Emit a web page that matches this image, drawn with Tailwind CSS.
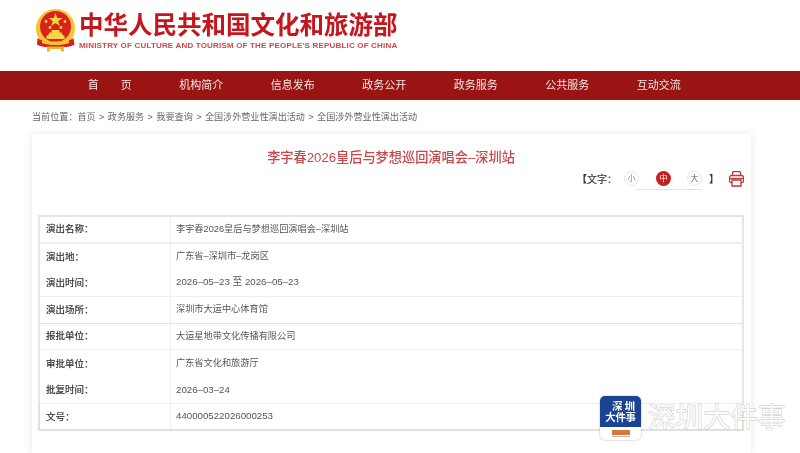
<!DOCTYPE html>
<html lang="zh"><head><meta charset="utf-8"><script src="https://cdn.jsdelivr.net/npm/@tailwindcss/browser@4"></script></head>
<body class="relative w-[800px] h-[453px] overflow-hidden bg-white font-['Liberation_Sans','Noto_Sans_CJK_SC',sans-serif]">
<header class="h-[71px] pl-[36px] pt-[9px] flex gap-[4px] items-start">
  <svg class="w-[39px] h-[43px] shrink-0 blur-[0.4px]" viewBox="0 0 39 43">
    <circle cx="19.5" cy="19.5" r="19.5" fill="#f4c52f"/>
    <circle cx="19.5" cy="17.5" r="15.5" fill="#d9211f"/>
    <polygon points="19.5,4 21.2,9 26.5,9 22.2,12.2 23.8,17 19.5,14 15.200,17 16.800,12.200 12.500,9 17.800,9" fill="#f9d53f"/>
    <circle cx="10" cy="12.500" r="1.400" fill="#f9d53f"/><circle cx="29" cy="12.500" r="1.400" fill="#f9d53f"/>
    <circle cx="14" cy="18.500" r="1.400" fill="#f9d53f"/><circle cx="25" cy="18.500" r="1.400" fill="#f9d53f"/>
    <path d="M15.500 21h8v2.500h2l1.500 3h1.500V30h-18v-3.500H12l1.500-3h2z" fill="#f9d53f"/>
    <path d="M1.500 29c5 3.500 10 4 18 4s13-.5 18-4l1 6.500c-3 2-7 2.500-10 2.500H11c-3 0-7-.5-10-2.500z" fill="#d9211f"/>
    <path d="M6 30.500c4 1.500 8 2 13.500 2s9.500-.5 13.500-2V34c-4 1.500-8 2-13.500 2S10 35.500 6 34z" fill="#f4c52f"/>
    <path d="M11 37.500h17v5h-3v-2.500H14v2.500h-3z" fill="#eab72b"/>
  </svg>
  <div class="blur-[0.3px]">
    <div class="text-[24.5px] leading-[24px] mt-[5px] font-bold text-[#c4161c] whitespace-nowrap">中华人民共和国文化和旅游部</div>
    <div class="text-[8px] leading-[10px] mt-[3px] font-bold tracking-[0.18px] text-[#d2474a] whitespace-nowrap">MINISTRY OF CULTURE AND TOURISM OF THE PEOPLE'S REPUBLIC OF CHINA</div>
  </div>
</header>
<nav class="h-[29px] bg-[#9a1414] pl-[64px] grid grid-cols-[repeat(7,91.5px)] items-center text-center text-[11px] text-[#f6e6e6] blur-[0.3px]">
  <a class="whitespace-pre">首&emsp;&emsp;页</a><a>机构简介</a><a>信息发布</a><a>政务公开</a><a>政务服务</a><a>公共服务</a><a>互动交流</a>
</nav>
<div class="h-[34px] pl-[32px] pt-[11px] text-[9.100px] leading-[12px] text-[#666] whitespace-nowrap blur-[0.3px] [word-spacing:0.9px]">当前位置：首页 &gt; 政务服务 &gt; 我要查询 &gt; 全国涉外营业性演出活动 &gt; 全国涉外营业性演出活动</div>
<main class="ml-[32px] w-[719px] h-[319px] bg-white shadow-[0_0_8px_rgba(60,70,110,0.13)] pt-[15px] px-[6px]">
  <h1 class="text-center text-[13.200px] leading-[17px] font-medium text-[#c9474a] pr-[1px] blur-[0.3px]">李宇春2026皇后与梦想巡回演唱会–深圳站</h1>
  <div class="mt-[5px] h-[44px] flex items-start blur-[0.25px]">
    <div class="ml-[541px] relative w-[170px] h-[26px] text-[10px] text-[#333] leading-[16px]">
      <span class="absolute left-[-2px] top-[1px] [-webkit-text-stroke:0.2px_#333]">【文字：</span>
      <span class="absolute left-[45px] top-[0px] w-[15px] h-[15px] rounded-full border border-[#e5e5e5] flex items-center justify-center text-[8px] text-[#888]">小</span>
      <span class="absolute left-[77px] top-[0px] w-[15px] h-[15px] rounded-full bg-[#c7211f] flex items-center justify-center text-[8px] text-white">中</span>
      <span class="absolute left-[57px] top-[18px] w-[66px] h-px bg-[#e4e4e4]"></span>
      <span class="absolute left-[108px] top-[0px] w-[15px] h-[15px] rounded-full border border-[#e5e5e5] flex items-center justify-center text-[8px] text-[#666]">大</span>
      <span class="absolute left-[130px] top-[1px] font-bold">】</span>
      <svg class="absolute left-[150px] top-[0px] w-[15px] h-[16px]" viewBox="0 0 15 16" fill="none" stroke="#c0393b" stroke-width="1.300"><path d="M3.500 5V2a1.500 1.500 0 0 1 1.500-1.500h5A1.500 1.500 0 0 1 11.500 2v3"/><path d="M3 11.500H2a1.500 1.500 0 0 1-1.500-1.500V6.500A2 2 0 0 1 2.500 4.500h10a2 2 0 0 1 2 2V10a1.500 1.500 0 0 1-1.500 1.500h-1"/><path d="M3 9h9v6H3z"/><path d="M1 7.500h13"/></svg>
    </div>
  </div>
  <table class="w-[706px] border-collapse text-[9.200px] text-[#555] table-fixed blur-[0.3px]">
    <colgroup><col class="w-[131px]"><col></colgroup>
    <tbody class="[&_td]:h-[26.800px] [&_td]:p-0 [&_td]:pl-[5.500px] [&_td:first-child]:pl-[6px] [&_td:first-child]:text-[9.500px] [&_td:first-child]:text-[#333] [&_td:first-child]:[-webkit-text-stroke:0.2px_#333] [&_td:first-child]:border-r [&_td:first-child]:border-r-[#eee]">
      <tr class="border-2 border-[#e6e6e6] border-b-[#eee]"><td>演出名称：</td><td>李宇春2026皇后与梦想巡回演唱会–深圳站</td></tr>
      <tr class="border-x-2 border-x-[#e6e6e6]"><td>演出地：</td><td>广东省–深圳市–龙岗区</td></tr>
      <tr class="border-x-2 border-x-[#e6e6e6] border-b border-b-[#eee]"><td>演出时间：</td><td class="text-[9.700px]">2026–05–23 至 2026–05–23</td></tr>
      <tr class="border-x-2 border-x-[#e6e6e6] border-b border-b-[#e4e4e4]"><td>演出场所：</td><td>深圳市大运中心体育馆</td></tr>
      <tr class="border-x-2 border-x-[#e6e6e6] border-b border-b-[#eee]"><td>报批单位：</td><td>大运星地带文化传播有限公司</td></tr>
      <tr class="border-x-2 border-x-[#e6e6e6]"><td>审批单位：</td><td>广东省文化和旅游厅</td></tr>
      <tr class="border-x-2 border-x-[#e6e6e6] border-b border-b-[#eee]"><td>批复时间：</td><td class="text-[9.700px]">2026–03–24</td></tr>
      <tr class="border-x-2 border-b-2 border-[#e0e0e0]"><td>文号：</td><td class="text-[9.700px]">440000522026000253</td></tr>
    </tbody>
  </table>
</main>
<div class="absolute left-[600px] top-[396px] w-[41px] h-[44px] rounded-[5px] overflow-hidden bg-white shadow-[0_0_2px_rgba(0,0,0,0.35)] blur-[0.25px]">
  <div class="h-[31px] bg-[#1b4393] text-white font-bold text-[10.500px] leading-[11px] text-center pt-[5px] whitespace-nowrap">
    <div class="tracking-[2px] pl-[8px]">深圳</div><div class="tracking-[-0.3px]">大件事</div>
  </div>
  <div class="mx-auto mt-[3px] w-[18px] h-[5px] bg-[#d9773a]"></div>
  <div class="mx-auto mt-px w-[18px] h-px bg-[#bbb]"></div>
</div>
<div class="absolute left-[648px] top-[400px] text-[27.500px] leading-[36px] whitespace-nowrap text-white/90 [paint-order:stroke_fill] [-webkit-text-stroke:1px_#c8c8c8]">深圳大件事</div>
</body></html>
